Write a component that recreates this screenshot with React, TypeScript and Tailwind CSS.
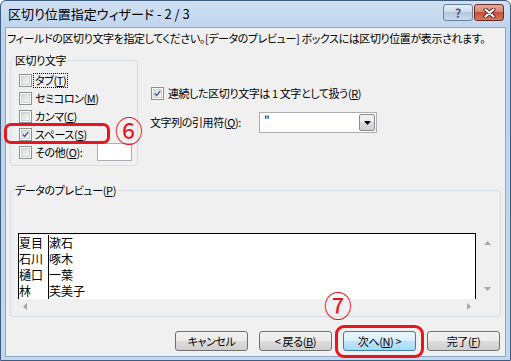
import React from "react"

const U = ({ children }: { children: React.ReactNode }) => <span className="underline underline-offset-[1px]">{children}</span>

function CheckBox({ checked }: { checked?: boolean }) {
  return (
    <span className="inline-flex w-[13px] h-[13px] shrink-0 items-center justify-center border border-[#8e8f8f] bg-white p-[1px]">
      <span className="flex w-full h-full items-center justify-center border border-[#cfd2d6] bg-[linear-gradient(135deg,#d5d8dc,#f7f7f7)]">
        {checked && (
          <svg width="9" height="9" viewBox="0 0 9 9">
            <path d="M1 4.5 L3.5 7 L8 1.5" fill="none" stroke="#3d57a0" strokeWidth="1.8" />
          </svg>
        )}
      </span>
    </span>
  )
}

function Button({ children, primary }: { children: React.ReactNode; primary?: boolean }) {
  return (
    <div
      className={`flex h-[20px] w-[73px] items-center justify-center rounded-[3px] border leading-none ${
        primary
          ? "border-[#3c7fb1] bg-[linear-gradient(to_bottom,#eaf6fd_0%,#d9f0fc_50%,#bee6fd_50%,#a7d9f5_100%)]"
          : "border-[#707070] bg-[linear-gradient(to_bottom,#f2f2f2_0%,#ebebeb_50%,#dddddd_50%,#cfcfcf_100%)]"
      }`}
    >
      {children}
    </div>
  )
}

const previewRows = [
  ["夏目", "漱石"],
  ["石川", "啄木"],
  ["樋口", "一葉"],
  ["林", "芙美子"],
]

export default function App() {
  return (
    <div className="relative flex h-[361px] w-[511px] flex-col overflow-hidden rounded-t-[6px] border border-[#3e5c80] bg-[linear-gradient(to_bottom,#cfe0f3,#bed4ec_30px,#c3d7ed)] font-['Noto_Sans_CJK_JP',sans-serif] text-[11px] tracking-[-0.4px] text-black [font-feature-settings:'palt']">
      {/* title bar */}
      <div className="flex h-[26px] shrink-0 items-start pl-[7px] pr-[6px]">
        <div className="mt-[4px] text-[13px] leading-[18px] tracking-normal">区切り位置指定ウィザード - 2 / 3</div>
        <div className="ml-auto mt-[3px] flex gap-[1px]">
          <div className="flex h-[17px] w-[30px] items-center justify-center rounded-[3px] border border-[#6a7f9c] bg-[linear-gradient(to_bottom,#e6eef7_0%,#ccdaea_50%,#b3c6de_50%,#c9d9ec_100%)] text-[12px] font-bold leading-none text-[#45597a]">
            ?
          </div>
          <div className="flex h-[17px] w-[30px] items-center justify-center rounded-[3px] border border-[#6d2b25] bg-[linear-gradient(to_bottom,#e9a99a_0%,#d6836f_50%,#c2503b_50%,#d5785f_100%)]">
            <svg width="13" height="10" viewBox="0 0 13 10">
              <path d="M2.5 1.5 L10.5 8.5 M10.5 1.5 L2.5 8.5" stroke="#5a2018" strokeWidth="4" strokeLinecap="round" />
              <path d="M2.5 1.5 L10.5 8.5 M10.5 1.5 L2.5 8.5" stroke="#ffffff" strokeWidth="2.2" strokeLinecap="round" />
            </svg>
          </div>
        </div>
      </div>

      {/* client area */}
      <div className="mx-[4px] mb-[3px] flex flex-1 flex-col border border-[#8da5c2] bg-[#f0f0f0]">
        <p className="mt-[2px] whitespace-nowrap pl-[1px] leading-[16px]">
          フィールドの区切り文字を指定してください。[データのプレビュー] ボックスには区切り位置が表示されます。
        </p>

        <div className="ml-[4px] mt-[7px] flex">
          <fieldset className="h-[113px] w-[128px] rounded-[3px] border border-[#d5dfe5]">
            <legend className="ml-[3px] px-[1px] leading-[14px]">区切り文字</legend>
            <div className="flex flex-col pl-[8px] pt-[4px]">
              <div className="flex h-[18px] items-center">
                <CheckBox />
                <span className="ml-[1px] border border-dotted border-black px-[1px] leading-[13px]">タブ(<U>T</U>)</span>
              </div>
              <div className="flex h-[18px] items-center">
                <CheckBox />
                <span className="ml-[3px]">セミコロン(<U>M</U>)</span>
              </div>
              <div className="flex h-[18px] items-center">
                <CheckBox />
                <span className="ml-[3px]">カンマ(<U>C</U>)</span>
              </div>
              <div className="flex h-[18px] items-center">
                <CheckBox checked />
                <span className="ml-[3px]">スペース(<U>S</U>)</span>
              </div>
              <div className="flex h-[18px] items-center">
                <CheckBox />
                <span className="ml-[3px] w-[62px]">その他(<U>O</U>):</span>
                <div className="h-[18px] w-[35px] border border-[#abadb3] bg-white" />
              </div>
            </div>
          </fieldset>

          <div className="ml-[12px] flex flex-col pt-[33px]">
            <div className="flex h-[14px] items-center pl-[1px]">
              <CheckBox checked />
              <span className="ml-[4px]">連続した区切り文字は 1 文字として扱う(<U>R</U>)</span>
            </div>
            <div className="mt-[12px] flex items-center">
              <span className="w-[109px]">文字列の引用符(<U>Q</U>):</span>
              <div className="flex h-[21px] w-[118px] items-center border border-[#abadb3] bg-white pl-[4px]">
                <span className="self-start text-[12px] leading-[14px] text-black">"</span>
                <div className="ml-auto mr-[1px] flex h-[17px] w-[16px] items-center justify-center rounded-[2px] border border-[#8c8c8c] bg-[linear-gradient(to_bottom,#f2f2f2_0%,#ebebeb_50%,#dddddd_50%,#cfcfcf_100%)]">
                  <svg width="7" height="4" viewBox="0 0 7 4">
                    <path d="M0 0 H7 L3.5 4 Z" fill="#000" />
                  </svg>
                </div>
              </div>
            </div>
          </div>
        </div>

        <fieldset className="ml-[4px] mt-[17px] h-[134px] w-[491px] rounded-[3px] border border-[#d5dfe5]">
          <legend className="ml-[3px] px-[1px] leading-[14px]">
            データのプレビュー(<U>P</U>)
          </legend>
          <div className="flex flex-col pl-[7px] pt-[36px]">
            <div className="flex">
              <div className="flex h-[66px] w-[458px] overflow-hidden border-x border-t border-black bg-white pt-[1px] text-[12px] tracking-normal [font-feature-settings:normal]">
                <div className="flex w-[30px] flex-col border-r border-black">
                  {previewRows.map(r => (
                    <div key={r[0]} className="h-[16px] leading-[16px]">{r[0]}</div>
                  ))}
                </div>
                <div className="flex flex-col">
                  {previewRows.map(r => (
                    <div key={r[1]} className="h-[16px] leading-[16px]">{r[1]}</div>
                  ))}
                </div>
              </div>
              <div className="flex w-[22px] flex-col items-center justify-between py-[8px]">
                <svg width="7" height="4" viewBox="0 0 7 4"><path d="M3.5 0 L7 4 H0 Z" fill="#a6a6a6" /></svg>
                <svg width="7" height="4" viewBox="0 0 7 4"><path d="M0 0 H7 L3.5 4 Z" fill="#a6a6a6" /></svg>
              </div>
            </div>
            <div className="flex h-[15px] w-[480px] items-center justify-between pl-[5px] pr-[27px]">
              <svg width="4" height="7" viewBox="0 0 4 7"><path d="M4 0 V7 L0 3.5 Z" fill="#a6a6a6" /></svg>
              <svg width="4" height="7" viewBox="0 0 4 7"><path d="M0 0 L4 3.5 L0 7 Z" fill="#a6a6a6" /></svg>
            </div>
          </div>
        </fieldset>

        <div className="mt-[14px] flex justify-end gap-[11px] pr-[5px]">
          <Button>キャンセル</Button>
          <Button>&lt; 戻る(<U>B</U>)</Button>
          <Button primary>次へ(<U>N</U>) &gt;</Button>
          <Button>完了(<U>F</U>)</Button>
        </div>
      </div>

      {/* annotations */}
      <div className="absolute left-[3px] top-[122px] h-[21px] w-[106px] rounded-[7px] border-[3px] border-[#e8141e]" />
      <div className="absolute left-[114px] top-[115px] flex h-[28px] w-[28px] items-center justify-center text-[28px] leading-none tracking-normal text-[#e8141e]">⑥</div>
      <div className="absolute left-[334px] top-[324px] h-[33px] w-[89px] rounded-[9px] border-[3px] border-[#e8141e]" />
      <div className="absolute left-[323px] top-[290px] flex h-[28px] w-[28px] items-center justify-center text-[28px] leading-none tracking-normal text-[#e8141e]">⑦</div>
    </div>
  )
}
